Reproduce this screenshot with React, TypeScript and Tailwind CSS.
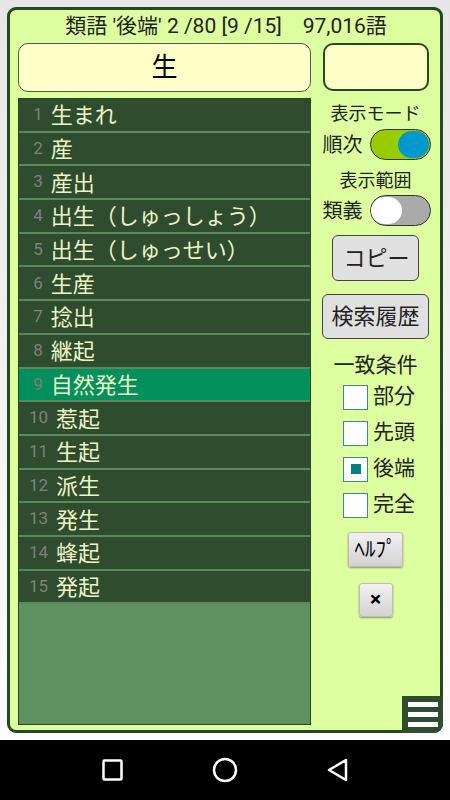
import React from "react";

const words = [
  "生まれ",
  "産",
  "産出",
  "出生（しゅっしょう）",
  "出生（しゅっせい）",
  "生産",
  "捻出",
  "継起",
  "自然発生",
  "惹起",
  "生起",
  "派生",
  "発生",
  "蜂起",
  "発起",
];

const font = { fontFamily: "Roboto, 'Noto Sans CJK JP', sans-serif" };

function Toggle({ on }: { on: boolean }) {
  return (
    <div
      className={
        "relative h-[31px] w-[61px] rounded-full border-[1.5px] border-[#333] " +
        (on ? "bg-[#99cc00]" : "bg-[#aaaaaa]")
      }
    >
      <div
        className={
          "absolute top-[0.5px] h-[27px] w-[31px] rounded-full " +
          (on ? "right-[0.5px] bg-[#0099cc]" : "left-[0.5px] bg-white")
        }
      />
    </div>
  );
}

function Check({ label, checked }: { label: string; checked?: boolean }) {
  return (
    <div className="flex h-[36px] items-center gap-[5px] pl-[32px]">
      <div className="flex h-[25px] w-[25px] items-center justify-center border-[1.5px] border-[#3a8c8c] bg-white">
        {checked && <div className="h-[10px] w-[10px] bg-[#008080]" />}
      </div>
      <span className="text-[21px] text-[#222]">{label}</span>
    </div>
  );
}

export default function App() {
  return (
    <div className="relative h-[800px] w-[450px] overflow-hidden bg-gradient-to-b from-[#e6e6e6] to-white" style={font}>
      <div className="absolute left-[7px] top-[7px] flex h-[726px] w-[436px] flex-col rounded-[9px] border-[3px] border-[#234a23] bg-[#ddffa0] px-[8px]">
        <div className="flex h-[33px] items-center justify-center pl-[2px] text-[21px] text-[#222]">
          <span className="whitespace-pre">類語 '後端' 2 /80 [9 /15]    97,016語</span>
        </div>
        <div className="flex gap-[12px]">
          <div className="flex h-[49px] w-[293px] items-center justify-center rounded-[10px] border border-[#555] bg-[#ffffc8] text-[26px] text-black">
            生
          </div>
          <div className="h-[48px] w-[106px] rounded-[10px] border-2 border-[#234a23] bg-[#ffffc8]" />
        </div>
        <div className="mt-[6px] flex">
          <div className="flex h-[627px] w-[293px] flex-col border border-[#234a23] bg-[#5f9060]">
            {words.map((w, i) => (
              <div
                key={i}
                className={
                  "flex h-[33.7px] shrink-0 items-center border-b-2 border-[#5a8a58] pl-[10px] " +
                  (i === 8 ? "bg-[#00905e]" : "bg-[#2f4c2f]")
                }
              >
                <span className="whitespace-pre text-[17px] text-[#808080]">
                  {i < 9 ? "\u00a0" + (i + 1) : i + 1}
                </span>
                <span className="ml-[8px] mt-[2px] text-[22px] text-[#ecf5c4]">{w}</span>
              </div>
            ))}
          </div>
          <div className="-mr-[8px] flex flex-1 flex-col items-center text-[#222]">
            <div className="mt-[4px] text-[18px] leading-[24px]">表示モード</div>
            <div className="mt-[3px] flex items-center gap-[7px] pl-[2px]">
              <span className="text-[20px]">順次</span>
              <Toggle on />
            </div>
            <div className="mt-[9px] text-[18px] leading-[24px]">表示範囲</div>
            <div className="mt-[2px] flex items-center gap-[7px] pl-[2px]">
              <span className="text-[20px]">類義</span>
              <Toggle on={false} />
            </div>
            <div className="mt-[9px] flex h-[46px] w-[87px] items-center justify-center rounded-[6px] border border-[#444] bg-[#e0e0e0] pl-[2px] text-[22px]">
              コピー
            </div>
            <div className="mt-[13px] flex h-[45px] w-[107px] items-center justify-center rounded-[6px] border border-[#444] bg-[#e0e0e0] text-[22px]">
              検索履歴
            </div>
            <div className="mt-[12px] text-[21px] leading-[28px]">一致条件</div>
            <div className="flex w-full flex-col">
              <Check label="部分" />
              <Check label="先頭" />
              <Check label="後端" checked />
              <Check label="完全" />
            </div>
            <div className="mt-[9px] flex h-[35px] w-[55px] items-center justify-center rounded-[3px] border border-[#bbb] bg-gradient-to-b from-[#f2f2f2] to-[#d2d2d2] text-[21px] text-black shadow-[0_1px_2px_rgba(0,0,0,0.4)]">
              ﾍﾙﾌﾟ
            </div>
            <div className="mt-[16px] flex h-[34px] w-[34px] items-center justify-center rounded-[3px] border border-[#bbb] bg-gradient-to-b from-[#f2f2f2] to-[#d2d2d2] text-[21px] font-bold text-black shadow-[0_1px_2px_rgba(0,0,0,0.4)]">
              ×
            </div>
          </div>
        </div>
        <div className="absolute bottom-[-3px] right-[-3px] flex h-[37px] w-[41px] flex-col items-center justify-center gap-[5px] rounded-br-[9px] bg-[#2f4c2f] pl-[1px]">
          <div className="h-[5px] w-[30px] bg-white" />
          <div className="h-[5px] w-[30px] bg-white" />
          <div className="h-[5px] w-[30px] bg-white" />
        </div>
      </div>
      <div className="absolute bottom-0 left-0 flex h-[60px] w-[450px] items-center bg-black">
        <svg width="450" height="60" viewBox="0 0 450 60">
          <rect x="103.5" y="20.5" width="18" height="19" rx="1" fill="none" stroke="white" strokeWidth="2.5" />
          <circle cx="225" cy="30" r="11" fill="none" stroke="white" strokeWidth="2.5" />
          <path d="M346 20 L346 40 L329 30 Z" fill="none" stroke="white" strokeWidth="2.5" strokeLinejoin="round" />
        </svg>
      </div>
    </div>
  );
}
